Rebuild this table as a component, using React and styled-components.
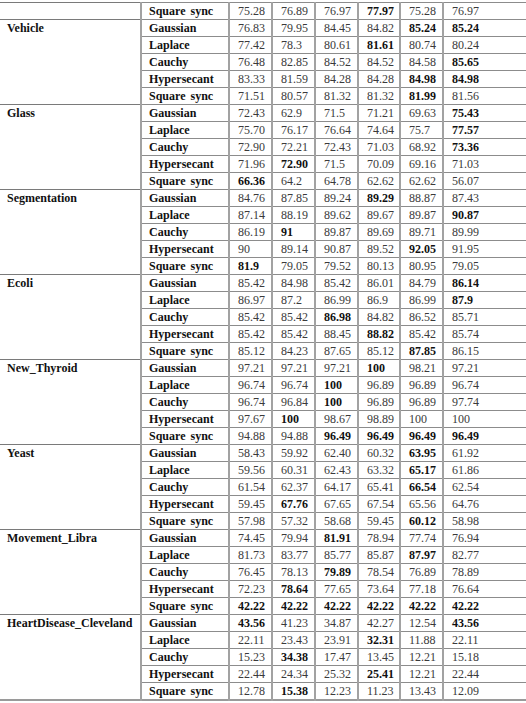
import styled, { createGlobalStyle } from "styled-components";

const GlobalStyle = createGlobalStyle`
  html, body {
    margin: 0;
    padding: 0;
    background: #fff;
    overflow: hidden;
  }
  body {
    padding-top: 2px;
    font-family: "Liberation Serif", "Times New Roman", serif;
  }
`;

const Table = styled.table`
  width: 526px;
  border-collapse: collapse;
  table-layout: fixed;
  font-size: 12px;
  border-bottom: 2px solid #9a9a9a;
`;

const Col = styled.col`
  width: ${(props) => (props.w ? `${props.w}px` : "auto")};
`;

const Row = styled.tr`
  height: 17px;
  border-top: ${(props) => (props.groupStart ? "1px solid #7a7a7a" : "none")};
`;

const DatasetCell = styled.td`
  vertical-align: top;
  padding: 0 0 0 7px;
  font-weight: bold;
  color: #111;
  line-height: 16px;
  border-right: 2px solid #a2a2a2;
  white-space: nowrap;
`;

const MethodCell = styled.td`
  padding: 0 0 0 7px;
  font-weight: bold;
  color: #111;
  line-height: 16px;
  word-spacing: 2px;
  border-top: 1px solid #8c8c8c;
  border-right: 2px solid #a2a2a2;
  white-space: nowrap;
`;

const ValueCell = styled.td`
  padding: 0 0 0 8px;
  line-height: 16px;
  font-weight: ${(props) => (props.best ? "bold" : "normal")};
  color: ${(props) => (props.best ? "#111" : "#3a3a3a")};
  border-top: 1px solid #8c8c8c;
  border-right: ${(props) => (props.last ? "none" : "2px solid #a2a2a2")};
  white-space: nowrap;
`;

const widths = [141, 88, 43, 43, 43, 42, 43, null];

const groups = [
  {
    name: "",
    rows: [["Square sync", "75.28", "76.89", "76.97", "*77.97", "75.28", "76.97"]],
  },
  {
    name: "Vehicle",
    rows: [
      ["Gaussian", "76.83", "79.95", "84.45", "84.82", "*85.24", "*85.24"],
      ["Laplace", "77.42", "78.3", "80.61", "*81.61", "80.74", "80.24"],
      ["Cauchy", "76.48", "82.85", "84.52", "84.52", "84.58", "*85.65"],
      ["Hypersecant", "83.33", "81.59", "84.28", "84.28", "*84.98", "*84.98"],
      ["Square sync", "71.51", "80.57", "81.32", "81.32", "*81.99", "81.56"],
    ],
  },
  {
    name: "Glass",
    rows: [
      ["Gaussian", "72.43", "62.9", "71.5", "71.21", "69.63", "*75.43"],
      ["Laplace", "75.70", "76.17", "76.64", "74.64", "75.7", "*77.57"],
      ["Cauchy", "72.90", "72.21", "72.43", "71.03", "68.92", "*73.36"],
      ["Hypersecant", "71.96", "*72.90", "71.5", "70.09", "69.16", "71.03"],
      ["Square sync", "*66.36", "64.2", "64.78", "62.62", "62.62", "56.07"],
    ],
  },
  {
    name: "Segmentation",
    rows: [
      ["Gaussian", "84.76", "87.85", "89.24", "*89.29", "88.87", "87.43"],
      ["Laplace", "87.14", "88.19", "89.62", "89.67", "89.87", "*90.87"],
      ["Cauchy", "86.19", "*91", "89.87", "89.69", "89.71", "89.99"],
      ["Hypersecant", "90", "89.14", "90.87", "89.52", "*92.05", "91.95"],
      ["Square sync", "*81.9", "79.05", "79.52", "80.13", "80.95", "79.05"],
    ],
  },
  {
    name: "Ecoli",
    rows: [
      ["Gaussian", "85.42", "84.98", "85.42", "86.01", "84.79", "*86.14"],
      ["Laplace", "86.97", "87.2", "86.99", "86.9", "86.99", "*87.9"],
      ["Cauchy", "85.42", "85.42", "*86.98", "84.82", "86.52", "85.71"],
      ["Hypersecant", "85.42", "85.42", "88.45", "*88.82", "85.42", "85.74"],
      ["Square sync", "85.12", "84.23", "87.65", "85.12", "*87.85", "86.15"],
    ],
  },
  {
    name: "New_Thyroid",
    rows: [
      ["Gaussian", "97.21", "97.21", "97.21", "*100", "98.21", "97.21"],
      ["Laplace", "96.74", "96.74", "*100", "96.89", "96.89", "96.74"],
      ["Cauchy", "96.74", "96.84", "*100", "96.89", "96.89", "97.74"],
      ["Hypersecant", "97.67", "*100", "98.67", "98.89", "100", "100"],
      ["Square sync", "94.88", "94.88", "*96.49", "*96.49", "*96.49", "*96.49"],
    ],
  },
  {
    name: "Yeast",
    rows: [
      ["Gaussian", "58.43", "59.92", "62.40", "60.32", "*63.95", "61.92"],
      ["Laplace", "59.56", "60.31", "62.43", "63.32", "*65.17", "61.86"],
      ["Cauchy", "61.54", "62.37", "64.17", "65.41", "*66.54", "62.54"],
      ["Hypersecant", "59.45", "*67.76", "67.65", "67.54", "65.56", "64.76"],
      ["Square sync", "57.98", "57.32", "58.68", "59.45", "*60.12", "58.98"],
    ],
  },
  {
    name: "Movement_Libra",
    rows: [
      ["Gaussian", "74.45", "79.94", "*81.91", "78.94", "77.74", "76.94"],
      ["Laplace", "81.73", "83.77", "85.77", "85.87", "*87.97", "82.77"],
      ["Cauchy", "76.45", "78.13", "*79.89", "78.54", "76.89", "78.89"],
      ["Hypersecant", "72.23", "*78.64", "77.65", "73.64", "77.18", "76.64"],
      ["Square sync", "*42.22", "*42.22", "*42.22", "*42.22", "*42.22", "*42.22"],
    ],
  },
  {
    name: "HeartDisease_Cleveland",
    rows: [
      ["Gaussian", "*43.56", "41.23", "34.87", "42.27", "12.54", "*43.56"],
      ["Laplace", "22.11", "23.43", "23.91", "*32.31", "11.88", "22.11"],
      ["Cauchy", "15.23", "*34.38", "17.47", "13.45", "12.21", "15.18"],
      ["Hypersecant", "22.44", "24.34", "25.32", "*25.41", "12.21", "22.44"],
      ["Square sync", "12.78", "*15.38", "12.23", "11.23", "13.43", "12.09"],
    ],
  },
];

function App() {
  return (
    <>
      <GlobalStyle />
      <Table>
        <colgroup>
          {widths.map((w, i) => (
            <Col key={i} w={w} />
          ))}
        </colgroup>
        <tbody>
          {groups.map((group, gi) =>
            group.rows.map((row, ri) => (
              <Row key={`${gi}-${ri}`} groupStart={ri === 0}>
                {ri === 0 && (
                  <DatasetCell rowSpan={group.rows.length}>{group.name}</DatasetCell>
                )}
                <MethodCell>{row[0]}</MethodCell>
                {row.slice(1).map((v, vi) => {
                  const best = v.startsWith("*");
                  return (
                    <ValueCell key={vi} best={best} last={vi === 5}>
                      {best ? v.slice(1) : v}
                    </ValueCell>
                  );
                })}
              </Row>
            ))
          )}
        </tbody>
      </Table>
    </>
  );
}

export default App;
